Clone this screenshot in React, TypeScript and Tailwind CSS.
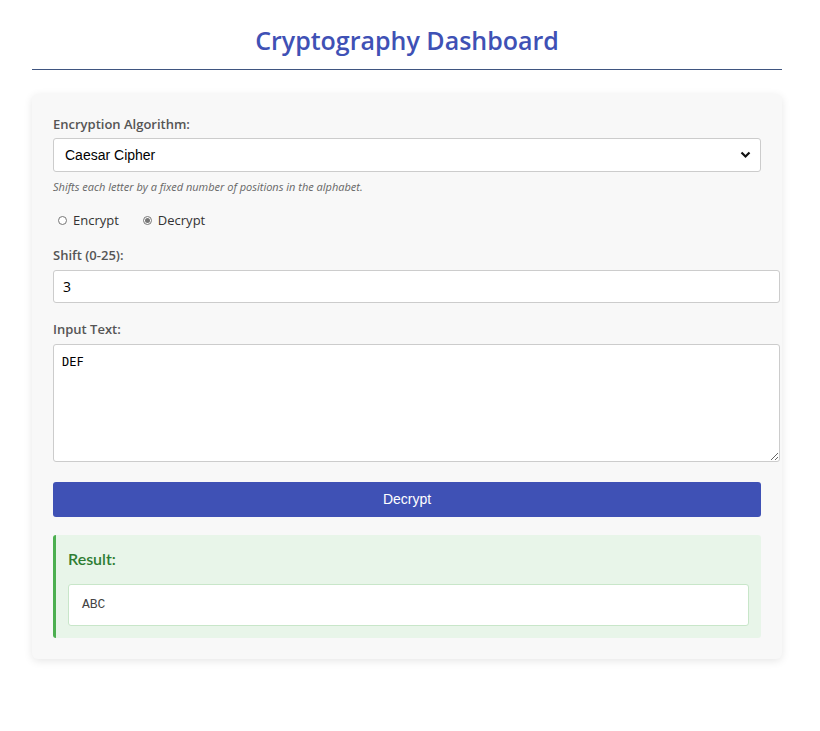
import { useState } from "react";

const sans = "font-['Open_Sans',sans-serif]";

function Radio({ checked, label }: { checked: boolean; label: string }) {
  return (
    <label className="flex items-center gap-[6px]">
      <span className="flex h-[9px] w-[9px] items-center justify-center rounded-full border border-[#767676] bg-white">
        {checked ? <span className="h-[5px] w-[5px] rounded-full bg-[#767676]" /> : null}
      </span>
      <span className="text-[13px] text-[#333]">{label}</span>
    </label>
  );
}

export default function App() {
  const [shift, setShift] = useState("3");
  const [text, setText] = useState("DEF");

  return (
    <div className={`min-h-screen bg-white ${sans}`}>
      <div className="ml-[32px] w-[750px]">
        <header className="border-b border-[#3f5580] pt-[21px] pb-[10px] text-center">
          <h1 className="text-[25px] leading-[38px] font-semibold text-[#3f51b5]">
            Cryptography Dashboard
          </h1>
        </header>

        <div className="mt-[24px] rounded-[6px] bg-[#f8f8f8] px-[21px] pt-[20px] pb-[21px] shadow-[0_2px_8px_rgba(0,0,0,0.1)]">
          <label className="block text-[13px] leading-[20px] font-semibold text-[#555]">
            Encryption Algorithm:
          </label>
          <div className="relative mt-[4px] w-[708px]">
            <select className="h-[34px] w-full appearance-none rounded-[3px] border border-[#ccc] bg-white pl-[11px] font-['Liberation_Sans',sans-serif] text-[14px] text-black">
              <option>Caesar Cipher</option>
            </select>
            <svg
              className="pointer-events-none absolute top-[13px] right-[10px]"
              width="11"
              height="8"
              viewBox="0 0 11 8"
            >
              <path d="M1.5 1.5 L5.5 5.5 L9.5 1.5" fill="none" stroke="#111" strokeWidth="2.2" />
            </svg>
          </div>
          <p className="mt-[7px] text-[11px] leading-[16px] text-[#666] italic">
            Shifts each letter by a fixed number of positions in the alphabet.
          </p>

          <div className="mt-[16px] flex gap-[24px] pl-[5px]">
            <Radio checked={false} label="Encrypt" />
            <Radio checked label="Decrypt" />
          </div>

          <label className="mt-[14px] block text-[13px] leading-[20px] font-semibold text-[#555]">
            Shift (0-25):
          </label>
          <input
            value={shift}
            onChange={(e) => setShift(e.target.value)}
            className="mt-[5px] block h-[33px] w-[727px] rounded-[3px] border border-[#ccc] bg-white px-[9px] text-[14px] text-black outline-none"
          />

          <label className="mt-[16px] block text-[13px] leading-[20px] font-semibold text-[#555]">
            Input Text:
          </label>
          <textarea
            value={text}
            onChange={(e) => setText(e.target.value)}
            className="mt-[5px] block h-[118px] w-[727px] resize-y rounded-[3px] border border-[#ccc] bg-white px-[8px] py-[8px] font-['DejaVu_Sans_Mono',monospace] text-[12px] text-black outline-none"
          />

          <button
            type="button"
            className="mt-[20px] block h-[35px] w-[708px] rounded-[3px] bg-[#3f51b5] font-['Liberation_Sans',sans-serif] text-[14px] text-white"
          >
            Decrypt
          </button>

          <div className="mt-[18px] w-[708px] rounded-[3px] border-l-[3px] border-[#4caf50] bg-[#e8f5e9] pt-[13px] pr-[12px] pb-[12px] pl-[12px]">
            <h3 className="font-['Lato',sans-serif] text-[16px] leading-[22px] font-semibold text-[#2e7d32]">
              Result:
            </h3>
            <div className="mt-[14px] flex h-[42px] items-center rounded-[3px] border border-[#c8e6c9] bg-white px-[13px] font-['Liberation_Mono',monospace] text-[13px] text-[#444]">
              ABC
            </div>
          </div>
        </div>
      </div>
    </div>
  );
}
